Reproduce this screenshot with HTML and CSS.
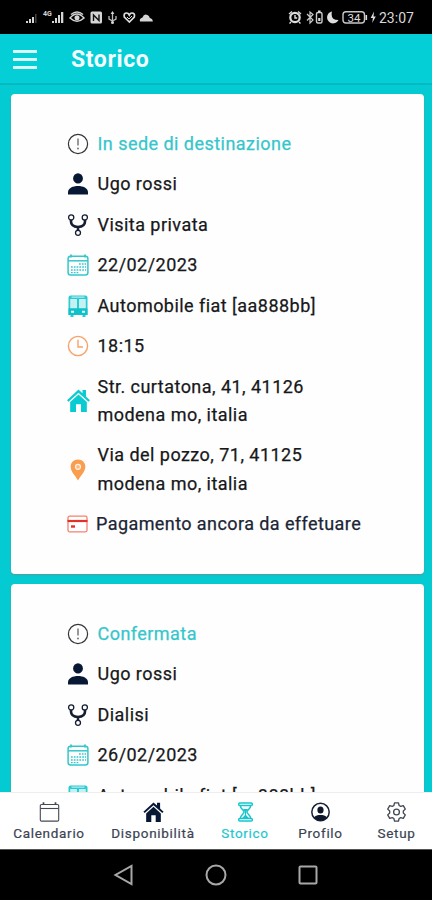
FILE: index.html
```html
<!DOCTYPE html>
<html lang="it">
<head>
<meta charset="utf-8">
<title>Storico</title>
<link rel="stylesheet" href="styles.css">
</head>
<body>
<svg class="sprite" width="0" height="0" aria-hidden="true">
  <symbol id="alert" viewBox="0 0 22 22"><circle cx="11" cy="11" r="9.600" fill="none" stroke="#34353d" stroke-width="1.200"/><path d="M11 5.500v7" stroke="#777" stroke-width="1.500"/><circle cx="11" cy="15.400" r="1" fill="#777"/></symbol>
  <symbol id="person" viewBox="0 0 22 22"><ellipse cx="11" cy="5.400" rx="4.900" ry="5.200"/><path d="M1 21.600v-2.200C1 15 6 13 11 13s10 2 10 6.400v2.200z"/></symbol>
  <symbol id="fork" viewBox="0 0 22 22"><g fill="none" stroke="#151d32"><path d="M4 5v2.500q0 5 7 5.500q7-.5 7-5.500V5M11 12.500V18" stroke-width="2.600"/><g fill="#fff" stroke-width="1.300"><circle cx="4.200" cy="3.400" r="2.600"/><circle cx="17.800" cy="3.400" r="2.600"/><circle cx="11" cy="18.800" r="2.500"/></g></g></symbol>
  <symbol id="date" viewBox="0 0 22 22"><rect x="1.100" y="2.200" width="19.800" height="18.800" rx="2.500" fill="none" stroke="#35c6cb" stroke-width="1.500"/><path d="M1 6.800h20" stroke="#35c6cb" stroke-width="1.500"/><path d="M4 .5v3M18 .5v3" stroke="#35c6cb" stroke-width="1.800"/><path d="M12 10h7M4 13h15M4 16h15M4 18.600h8" stroke="#35c6cb" stroke-width="1.400" stroke-dasharray="1.700 1.100"/></symbol>
  <symbol id="bus" viewBox="0 0 22 22"><path fill="#2ccbd1" d="M3.500.5h15q2 0 2 2V20h-2v2h-3v-2h-9v2h-3v-2h-2V2.500q0-2 2-2z"/><path fill="#c4f2f3" d="M3.200 4h6.800v9.400H3.200zM12 4h6.800v9.400H12z"/><path fill="#d4f6f7" d="M4.500 1.600h13v1h-13z"/><path fill="#0fc1c8" d="M1.500 13.400h19V20h-19z"/><path fill="#e5fafa" d="M4 15.700h3v2H4zM15 15.700h3v2h-3z"/></symbol>
  <symbol id="clock" viewBox="0 0 22 22"><g fill="none" stroke="#f5a36b" stroke-width="1.400"><circle cx="11" cy="11" r="9.600"/><path d="M11 4.800V12h5"/></g></symbol>
  <symbol id="home" viewBox="0 0 24 24"><path d="M12 1.500 L15.800 5V2h3.400v6.100L23 11.700l-1.400 1.500L12 4.600 2.400 13.200 1 11.700z"/><path d="M12 6.300l8 7.200V23h-5.600v-7.500H9.600V23H4v-9.500z"/></symbol>
  <symbol id="pin" viewBox="0 0 22 24"><path fill="#fb9d4e" d="M11 .500c4.700 0 8 3.400 8 7.900 0 5.400-5.700 10.400-8 15.100C8.700 18.800 3 13.800 3 8.400 3 3.900 6.300.5 11 .5z"/><circle cx="11" cy="8.500" r="2.700" fill="#fbb980" stroke="#fff0e2" stroke-width="1.400"/></symbol>
  <symbol id="card" viewBox="0 0 21 18"><rect x="1" y="1.200" width="19" height="15.600" rx="1.500" fill="#fff" stroke="#f3826f" stroke-width="1.300"/><path d="M.5 6h20" stroke="#e62f25" stroke-width="2.200"/><path d="M4 11.500h4" stroke="#e62f25" stroke-width="2.400"/></symbol>
  <symbol id="calendar" viewBox="0 0 20 20"><g fill="none" stroke="#444954" stroke-width="1.100"><rect x=".8" y="2.500" width="18.400" height="16.600" rx="1.200"/><path d="M1 6.500h18"/><path d="M4 .3v2.500M16 .3v2.500" stroke-width="1.700"/></g></symbol>
  <symbol id="hourglass" viewBox="0 0 16 20"><g fill="none" stroke="#16c6cd" stroke-width="1.500"><rect x="1.200" y=".9" width="13.600" height="2.600" rx="1"/><rect x="1.200" y="16.500" width="13.600" height="2.600" rx="1"/><path d="M2.800 3.500c0 3.500 3.800 4.500 3.800 6.500s-3.800 3-3.800 6.500M13.200 3.500c0 3.500-3.800 4.500-3.800 6.500s3.800 3 3.800 6.500"/></g><path d="M5.500 7h5L8.500 10v3l3 3.300h-7l3-3.300v-3z" fill="#16c6cd"/></symbol>
  <symbol id="profile" viewBox="0 0 20 20"><circle cx="10" cy="10" r="8.700" fill="#fff" stroke="#17203a" stroke-width="1.500"/><ellipse cx="10" cy="8" rx="3.100" ry="3.500" fill="#10172c"/><path fill="#10172c" d="M3.500 15.400C5 13.300 7.300 12.900 10 12.900s5 .4 6.500 2.500A8.400 8.400 0 0 1 3.500 15.400z"/></symbol>
  <symbol id="gear" viewBox="0 0 20 20"><g fill="none" stroke="#414753" stroke-width="1.300" stroke-linejoin="round"><circle cx="10" cy="10" r="2.900"/><path d="M8 .9h4l.6 2.600 1.600.9 2.600-.8 2 3.500-2 1.900v2l2 1.900-2 3.500-2.600-.8-1.600.9-.6 2.600H8l-.6-2.600-1.600-.9-2.600.8-2-3.500 2-1.900V9l-2-1.900 2-3.500 2.600.8 1.600-.9z"/></g></symbol>
</svg>
<div class="phone">
  <div class="status">
    <svg width="130" height="16" viewBox="0 0 130 16" fill="#d5d5d5" stroke="none">
      <path d="M2 14v-2h2v2zM5 14v-4h2v4zM8 14V8h2v6z"/><path d="M11 14V5h1.500v9z" fill="#444"/>
      <text x="19" y="7" class="net">4G</text>
      <path d="M28 14v-2h2v2zM31 14V9h2v5zM34 14V6h2v8zM37 14V3h2.300v11z"/>
      <g fill="none" stroke="#d5d5d5" stroke-width="1.500"><path d="M46 9q7-8 14 0q-7 6.500-14 0zM47 5.500q6-5 12 0"/></g><circle cx="53" cy="8.700" r="2.500"/>
      <rect x="66.500" y="2.500" width="11.500" height="12" rx="1.500"/><path d="M69.500 12V6l5.500 5.500V5.500" fill="none" stroke="#111" stroke-width="1.400"/>
      <path d="M88.500 3v11M85 7v3l3.500 2 3.500-2V7" fill="none" stroke="#bbb" stroke-width="1.300"/><path d="M86.700 5l1.800-3 1.800 3z"/><circle cx="88.500" cy="13.600" r="1.500"/>
      <path d="M105.300 13l-5-5q-1-4 2.500-4 1.500 0 2.500 2 1-2 2.500-2 3.500 0 2.500 4z" fill="none" stroke="#ddd" stroke-width="1.700"/><path d="M103 8l2 2 3-3" fill="none" stroke="#ddd"/>
      <path d="M116 12.500q-1-3 2.500-4 1.500-4.500 5-2.500 2 1 2.300 3 3 .5 3 3.500z"/>
    </svg>
    <svg class="status-right" width="90" height="16" viewBox="0 0 90 16" fill="#ddd">
      <circle cx="8" cy="8.500" r="4.700" fill="none" stroke="#ddd" stroke-width="2.200"/><path d="M8 6v3h2.200M2 5l3-2.500M14 5l-3-2.500M4 13l-1.500 1.500M12 13l1.500 1.500" fill="none" stroke="#ddd" stroke-width="1.400"/>
      <path d="M20 5l6 6-3 3V3l3 2.500-6 6" fill="none" stroke="#ccc" stroke-width="1.200"/><rect x="29.500" y="3.500" width="5.500" height="10.500" rx="1.500" fill="none" stroke="#ccc" stroke-width="1.400"/><path d="M31 1.500h2.500v2H31zM31.200 9h2.200v3h-2.200z"/>
      <path d="M45 2.500a6 6 0 1 0 6.500 8.500Q43 11 45 2.500z"/>
      <rect x="56" y="2.700" width="21.500" height="11.300" rx="3" fill="none" stroke="#c6c6c6" stroke-width="1.400"/><path d="M78.500 6h1.600v5h-1.600z"/><text x="60.500" y="12.500" class="charge">34</text>
      <path d="M87 2.500L83.700 9h2.200l-.7 5L88.800 7.500h-2.300z"/>
    </svg>
    <span class="time">23:07</span>
  </div>
  <header class="bar">
    <div class="menu"><i></i><i></i><i></i></div>
    <h1>Storico</h1>
  </header>
  <main class="content">
    <section class="trip">
      <div class="row state"><svg><use href="#alert"/></svg><span>In sede di destinazione</span></div>
      <div class="row"><svg class="navy"><use href="#person"/></svg><span>Ugo rossi</span></div>
      <div class="row"><svg><use href="#fork"/></svg><span>Visita privata</span></div>
      <div class="row"><svg><use href="#date"/></svg><span>22/02/2023</span></div>
      <div class="row"><svg><use href="#bus"/></svg><span>Automobile fiat [aa888bb]</span></div>
      <div class="row"><svg><use href="#clock"/></svg><span>18:15</span></div>
      <div class="row"><svg class="house"><use href="#home"/></svg><span>Str. curtatona, 41, 41126<br>modena mo, italia</span></div>
      <div class="row"><svg><use href="#pin"/></svg><span>Via del pozzo, 71, 41125<br>modena mo, italia</span></div>
      <div class="row payment"><svg><use href="#card"/></svg><span>Pagamento ancora da effetuare</span></div>
    </section>
    <section class="trip">
      <div class="row state"><svg><use href="#alert"/></svg><span>Confermata</span></div>
      <div class="row"><svg class="navy"><use href="#person"/></svg><span>Ugo rossi</span></div>
      <div class="row"><svg><use href="#fork"/></svg><span>Dialisi</span></div>
      <div class="row"><svg><use href="#date"/></svg><span>26/02/2023</span></div>
      <div class="row"><svg><use href="#bus"/></svg><span>Automobile fiat [aa888bb]</span></div>
    </section>
  </main>
  <nav class="tabs">
    <div class="tab"><svg><use href="#calendar"/></svg><span>Calendario</span></div>
    <div class="tab"><svg class="navy large"><use href="#home"/></svg><span>Disponibilità</span></div>
    <div class="tab active"><svg><use href="#hourglass"/></svg><span>Storico</span></div>
    <div class="tab"><svg><use href="#profile"/></svg><span>Profilo</span></div>
    <div class="tab"><svg><use href="#gear"/></svg><span>Setup</span></div>
  </nav>
  <footer class="system">
    <svg width="22" height="22"><path d="M18.500 2v18L2.500 11z"/></svg>
    <svg width="22" height="22"><circle cx="11" cy="11" r="9.500"/></svg>
    <svg width="22" height="22"><rect x="2.500" y="2.500" width="17" height="17" rx="1"/></svg>
  </footer>
</div>
</body>
</html>
```
FILE: styles.css
```css
* { box-sizing: border-box; }
body { margin: 0; background: #000; font-family: Roboto, "Liberation Sans", sans-serif; }
.sprite { display: block; height: 0; }
.phone { width: 432px; height: 900px; display: flex; flex-direction: column; overflow: hidden; background: #000; }
.status { height: 34px; flex: none; display: flex; align-items: center; padding: 0 17px 0 24px; }
.status svg { flex: none; }
.status-right { margin-left: auto; }
.net { font-size: 7px; font-weight: 700; }
.charge { font-size: 11.500px; }
.time { width: 36px; margin-left: 2px; color: #d8d8d8; font-size: 14px; line-height: 18px; padding-top: 1px; }
.bar { height: 51px; flex: none; display: flex; align-items: center; padding: 2px 0 0 13px; background: #04ced6; border-bottom: 2px solid #04b9c3; }
.menu { width: 24px; display: flex; flex-direction: column; gap: 5px; }
.menu i { height: 3px; background: #d9fbfc; }
h1 { margin: 0 0 0 34px; color: #f4ffff; font-size: 23px; line-height: 30px; font-weight: 700; letter-spacing: .6px; }
.content { flex: 1; min-height: 0; overflow: hidden; padding: 9px 8px 0 11px; background: #04cbd2; display: flex; flex-direction: column; gap: 10px; }
.trip { flex: none; height: 480px; border-radius: 4px; background: #fefefe; padding: 35.600px 0 0 56px; display: flex; flex-direction: column; gap: 12.300px; box-shadow: 0 1px 2px #5a9a9d; }
.row { display: flex; align-items: center; color: #17181a; font-size: 18px; line-height: 28.200px; letter-spacing: .46px; -webkit-text-stroke: .25px currentColor; }
.row svg { flex: none; width: 22px; height: 22px; margin-right: 8.500px; }
.row .house { width: 25px; height: 25px; margin: 0 7px 0 -1.500px; fill: #0bcbd2; }
.state { color: #35c6cc; }
.navy { fill: #071834; }
.payment { color: #1c2535; letter-spacing: .42px; }
.payment svg { width: 21px; height: 18px; margin-right: 8.500px; margin-left: -.5px; }
.tabs { height: 57px; flex: none; display: grid; grid-template-columns: 98px 110px 74px 77px 75px; background: #fff; border-top: 1px solid #eee; }
.tab { display: flex; flex-direction: column; align-items: center; padding-top: 9px; color: #3b4352; font-size: 13.500px; line-height: 18px; letter-spacing: .7px; white-space: nowrap; -webkit-text-stroke: .2px currentColor; }
.tab svg { width: 21px; height: 20px; margin-bottom: 2px; }
.tab .large { width: 23px; height: 22px; margin: -1px 0 1px; }
.active { color: #1cc8cf; }
.system { height: 51px; flex: none; display: flex; justify-content: center; gap: 70px; padding-top: 14px; background: #000; border-top: 1px solid #555; }
.system svg { fill: none; stroke: #a8a8a8; stroke-width: 2; }
```
